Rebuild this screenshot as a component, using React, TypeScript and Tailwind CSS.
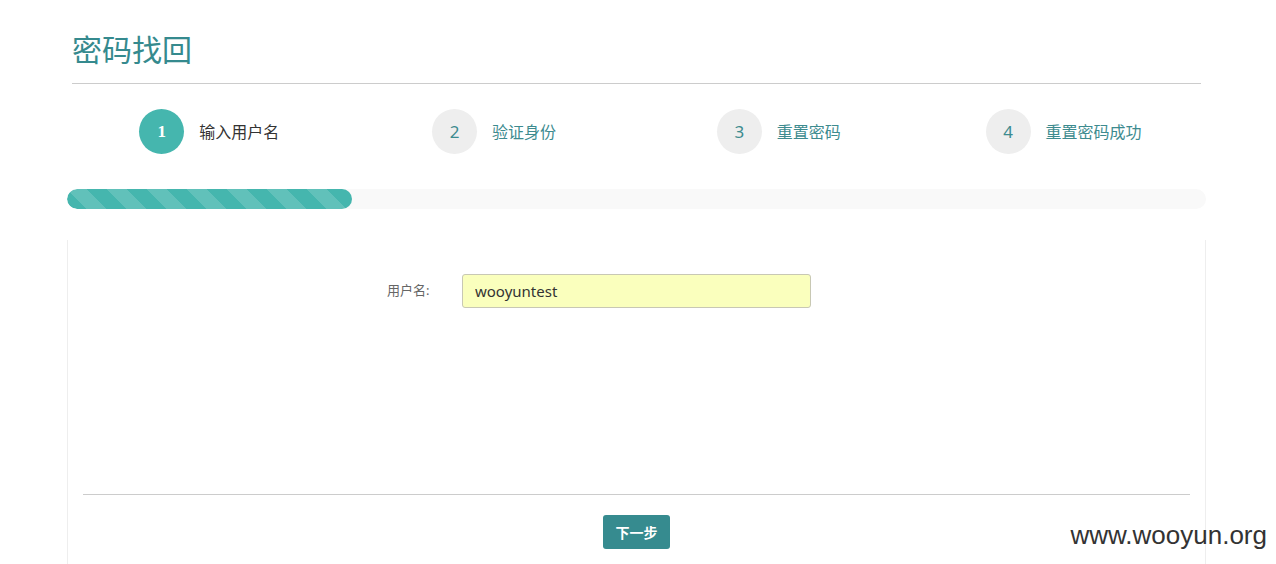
const steps = [
  { n: "1", label: "输入用户名", active: true },
  { n: "2", label: "验证身份", active: false },
  { n: "3", label: "重置密码", active: false },
  { n: "4", label: "重置密码成功", active: false },
];

function Step({ n, label, active }: { n: string; label: string; active: boolean }) {
  return (
    <div className="flex items-center justify-center">
      <div
        className={
          active
            ? "w-[45px] h-[45px] rounded-full bg-[#45b6ae] flex items-center justify-center text-white text-[17px] font-bold font-['Liberation_Serif',serif]"
            : "w-[45px] h-[45px] rounded-full bg-[#eeeeee] flex items-center justify-center text-[#3d8b8f] text-[17px]"
        }
      >
        {n}
      </div>
      <span className={active ? "ml-[15px] text-[16px] text-[#333333]" : "ml-[15px] text-[16px] text-[#3d8b8f]"}>
        {label}
      </span>
    </div>
  );
}

export default function App() {
  return (
    <div className="relative h-[564px] bg-white font-['Noto_Sans','Noto_Sans_CJK_SC',sans-serif] overflow-hidden">
      <div className="ml-[67px] w-[1139px]">
        <div className="mx-[5px] pt-[28px]">
          <h1 className="text-[30px] leading-[44px] text-[#358a8e]">密码找回</h1>
          <div className="mt-[11px] h-px bg-[#cccccc]" />
        </div>

        <div className="grid grid-cols-4 mt-[25px]">
          {steps.map((s) => (
            <Step key={s.n} {...s} />
          ))}
        </div>

        <div className="mt-[35px] h-[20px] rounded-full bg-[#f9f9f9] overflow-hidden">
          <div className="w-1/4 h-full rounded-full bg-[#45b6ae] bg-[linear-gradient(45deg,rgba(255,255,255,.15)_25%,transparent_25%,transparent_50%,rgba(255,255,255,.15)_50%,rgba(255,255,255,.15)_75%,transparent_75%,transparent)] bg-[length:40px_40px]" />
        </div>

        <div className="mt-[31px] h-[324px] border-x border-[#eeeeee] px-[15px] pt-[34px]">
          <div className="flex items-center pl-[304px]">
            <label className="w-[75px] text-[13px] text-[#666666]">用户名:</label>
            <input
              defaultValue="wooyuntest"
              className="w-[349px] h-[34px] rounded-[3px] border border-[#c8c8b4] bg-[#faffbd] px-[12px] text-[15px] text-[#333333] outline-none"
            />
          </div>
          <div className="mt-[186px] h-px bg-[#cccccc]" />
          <div className="flex justify-center mt-[20px]">
            <button className="w-[67px] h-[34px] rounded-[3px] bg-[#368b8f] text-white text-[14px] font-semibold">
              下一步
            </button>
          </div>
        </div>
      </div>

      <div className="absolute right-[9px] top-[516px] text-[26px] text-[#333333] font-['Liberation_Sans',sans-serif]">
        www.wooyun.org
      </div>
    </div>
  );
}
